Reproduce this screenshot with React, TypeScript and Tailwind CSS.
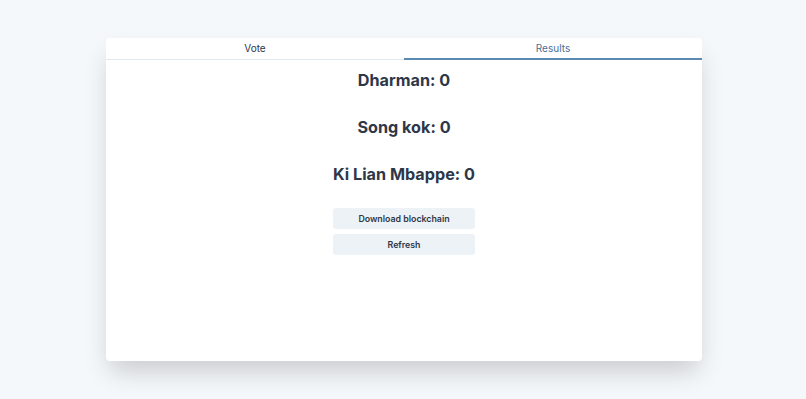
import React, { useState } from "react";

const candidates = [
    { name: "Dharman", votes: 0 },
    { name: "Song kok", votes: 0 },
    { name: "Ki Lian Mbappe", votes: 0 },
];

export default function App() {
    const [tab, setTab] = useState<"vote" | "results">("results");

    return (
        <div
            className="min-h-[399px] w-full bg-[#f5f8fb] pt-[38px] text-[#2d3748]"
            style={{ fontFamily: "Inter, 'Noto Sans', sans-serif" }}
        >
            <div className="ml-[106px] h-[323px] w-[596px] rounded-[4px] bg-white shadow-[0_14px_24px_-4px_rgba(0,0,0,0.18)]">
                <div className="flex border-b border-[#e2e8f0]">
                    <button
                        onClick={() => setTab("vote")}
                        className={
                            tab === "vote"
                                ? "-mb-px h-[22px] flex-1 border-b-2 border-[#5b89b1] text-[10px] text-[#4a6f98]"
                                : "-mb-px h-[22px] flex-1 border-b-2 border-transparent text-[10px] text-[#2d3748]"
                        }
                    >
                        Vote
                    </button>
                    <button
                        onClick={() => setTab("results")}
                        className={
                            tab === "results"
                                ? "-mb-px h-[22px] flex-1 border-b-2 border-[#5b89b1] text-[10px] text-[#4a6f98]"
                                : "-mb-px h-[22px] flex-1 border-b-2 border-transparent text-[10px] text-[#2d3748]"
                        }
                    >
                        Results
                    </button>
                </div>

                {tab === "results" ? (
                    <div className="mx-auto flex w-fit flex-col items-stretch pt-[7px]">
                        {candidates.map((c) => (
                            <h2
                                key={c.name}
                                className="mb-[20px] text-center text-[16.2px] font-bold leading-[27px]"
                            >
                                {c.name}: {c.votes}
                            </h2>
                        ))}
                        <div className="flex flex-col gap-[5px]">
                            <button className="h-[21px] w-full rounded-[3px] bg-[#edf2f7] text-[8.8px] font-semibold">
                                Download blockchain
                            </button>
                            <button className="h-[21px] w-full rounded-[3px] bg-[#edf2f7] text-[8.8px] font-semibold">
                                Refresh
                            </button>
                        </div>
                    </div>
                ) : (
                    <div className="p-4 text-[10px]">Cast your vote</div>
                )}
            </div>
        </div>
    );
}
